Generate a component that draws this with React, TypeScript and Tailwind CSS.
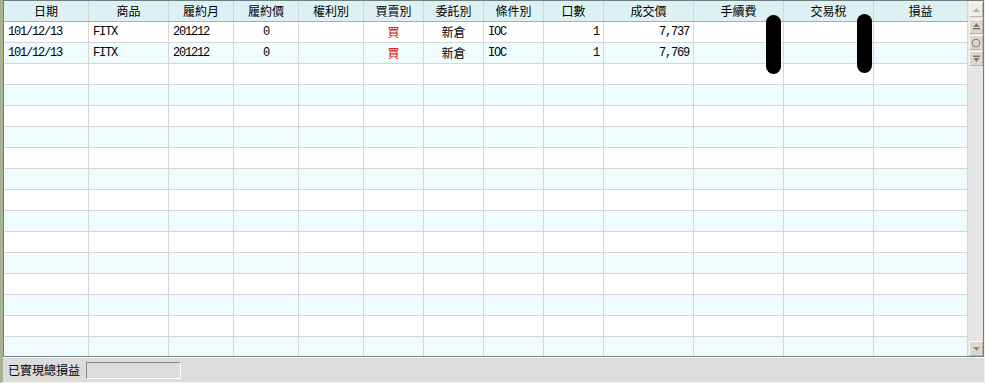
import React from "react";

const COLUMNS = [
  { label: "日期", w: "w-[85px]", align: "text-left" },
  { label: "商品", w: "w-[80px]", align: "text-left" },
  { label: "履約月", w: "w-[65px]", align: "text-left" },
  { label: "履約價", w: "w-[65px]", align: "text-center" },
  { label: "權利別", w: "w-[65px]", align: "text-center" },
  { label: "買賣別", w: "w-[60px]", align: "text-center" },
  { label: "委託別", w: "w-[60px]", align: "text-center" },
  { label: "條件別", w: "w-[60px]", align: "text-left" },
  { label: "口數", w: "w-[60px]", align: "text-right" },
  { label: "成交價", w: "w-[90px]", align: "text-right" },
  { label: "手續費", w: "w-[90px]", align: "text-right" },
  { label: "交易稅", w: "w-[90px]", align: "text-right" },
  { label: "損益", w: "w-[94px]", align: "text-right" },
];

const TRADES = [
  ["101/12/13", "FITX", "201212", "0", "", "買", "新倉", "IOC", "1", "7,737", "", "", ""],
  ["101/12/13", "FITX", "201212", "0", "", "買", "新倉", "IOC", "1", "7,769", "", "", ""],
];

const CJK = "font-['Noto_Sans_CJK_TC',sans-serif]";
const MONO = "font-['Liberation_Mono','Noto_Sans_CJK_TC',monospace]";

function ScrollBtn({ children, light }: { children: React.ReactNode; light?: boolean }) {
  return (
    <div
      className={`flex h-[15px] w-[14px] items-center justify-center border border-t-[#fbfaf4] border-l-[#fbfaf4] border-r-[#b8b5a6] border-b-[#b8b5a6] ${
        light ? "bg-[#efede3]" : "bg-[#dcd8ca]"
      }`}
    >
      {children}
    </div>
  );
}

function Row({ cells, idx }: { cells: string[]; idx: number }) {
  const bg = idx % 2 === 0 ? "bg-white" : "bg-[#eefcfe]";
  return (
    <div className={`flex h-[21px] shrink-0 border-b border-[#d6d6d6] ${bg}`}>
      {COLUMNS.map((c, i) => {
        const v = cells[i] ?? "";
        const isCjk = /[\u4e00-\u9fff]/.test(v);
        return (
          <div
            key={c.label}
            className={`${c.w} ${c.align} h-full shrink-0 border-r border-[#d6d6d6] px-[4px] text-[12px] leading-[20px] ${
              isCjk ? CJK : MONO + " tracking-[-1.2px]"
            } ${v === "買" ? "text-[#e00000]" : "text-black"}`}
          >
            {v}
          </div>
        );
      })}
    </div>
  );
}

export default function App() {
  const rows = Array.from({ length: 16 }, (_, i) => TRADES[i] ?? []);
  return (
    <div className="relative flex h-[383px] w-[985px] flex-col overflow-hidden border-l-[3px] border-r border-b border-l-[#a9b48f] border-r-[#f4f3ea] border-b-[#f4f3ea] bg-[#dcdcdc]">
      <div className="flex h-[357px] shrink-0 border border-[#6e7f7f] bg-white">
        <div className="flex w-[964px] shrink-0 flex-col overflow-hidden">
          <div className="flex h-[21px] shrink-0 border-b border-[#a3b0b0] bg-[#ddf1f4]">
            {COLUMNS.map((c) => (
              <div
                key={c.label}
                className={`${c.w} h-full shrink-0 border-r border-[#d0d8d8] text-center text-[12px] leading-[20px] text-black ${CJK}`}
              >
                {c.label}
              </div>
            ))}
          </div>
          {rows.map((r, i) => (
            <Row key={i} cells={r} idx={i} />
          ))}
        </div>
        <div className="flex w-[15px] shrink-0 flex-col items-end bg-[#e6e6e6] pt-[1px]">
          <ScrollBtn light>
            <svg width="9" height="6" viewBox="0 0 9 6">
              <polygon points="4.5,1 8,5 1,5" fill="#b4b2a6" />
            </svg>
          </ScrollBtn>
          <div className="mt-[2px] flex flex-col gap-[1px]">
            <ScrollBtn>
              <svg width="9" height="9" viewBox="0 0 9 9">
                <polygon points="4.5,1 7.5,5 1.5,5" fill="#7c7a70" />
                <rect x="1" y="6" width="7" height="1.5" fill="#7c7a70" />
              </svg>
            </ScrollBtn>
            <ScrollBtn>
              <svg width="10" height="10" viewBox="0 0 10 10">
                <circle cx="5" cy="5" r="3.8" fill="none" stroke="#7c7a70" strokeWidth="1" />
              </svg>
            </ScrollBtn>
            <ScrollBtn>
              <svg width="9" height="9" viewBox="0 0 9 9">
                <rect x="1" y="1.5" width="7" height="1.5" fill="#7c7a70" />
                <polygon points="1.5,4 7.5,4 4.5,8" fill="#7c7a70" />
              </svg>
            </ScrollBtn>
          </div>
          <div className="flex-1" />
          <ScrollBtn>
            <svg width="9" height="6" viewBox="0 0 9 6">
              <polygon points="1,1 8,1 4.5,5" fill="#8c8a80" />
            </svg>
          </ScrollBtn>
        </div>
      </div>

      <div className="flex h-[25px] shrink-0 items-center border-t border-white pl-[5px]">
        <span className={`text-[12px] leading-none text-black ${CJK}`}>已實現總損益</span>
        <div className="ml-[6px] h-[17px] w-[95px] border border-t-[#8a8a8a] border-l-[#8a8a8a] border-r-white border-b-white bg-[#dcdcdc]" />
      </div>

      <div className="absolute left-[763px] top-[15px] h-[59px] w-[15px] rounded-full bg-black" />
      <div className="absolute left-[854px] top-[14px] h-[59px] w-[15px] rounded-full bg-black" />
    </div>
  );
}
